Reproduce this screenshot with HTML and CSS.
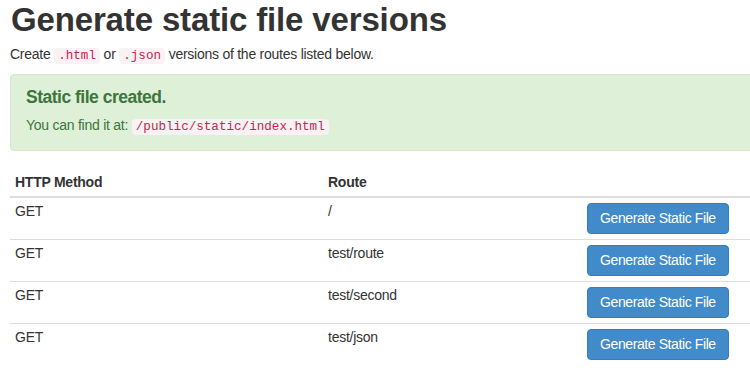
FILE: index.html
```html
<!DOCTYPE html>
<html lang="en">
<head>
  <meta charset="UTF-8">
  <title>Generate static file versions</title>
  <meta name="viewport" content="width=device-width, initial-scale=1.0">
  <link rel="stylesheet" href="styles.css">
</head>
<body>

  <div class="page">
    <h1>Generate static file versions</h1>
    <p class="lead-text">Create <code>.html</code> or <code>.json</code> versions of the routes listed below.</p>

    <!-- success message -->
    <div class="alert">
      <h4>Static file created.</h4>
      <p>You can find it at: <code>/public/static/index.html</code></p>
    </div>

    <!-- routes -->
    <table class="routes">
      <colgroup>
        <col class="col-method">
        <col class="col-route">
        <col>
      </colgroup>
      <thead>
        <tr>
          <th>HTTP Method</th>
          <th>Route</th>
          <th></th>
        </tr>
      </thead>
      <tbody>
        <tr>
          <td>GET</td>
          <td>/</td>
          <td><button class="btn">Generate Static File</button></td>
        </tr>
        <tr>
          <td>GET</td>
          <td>test/route</td>
          <td><button class="btn">Generate Static File</button></td>
        </tr>
        <tr>
          <td>GET</td>
          <td>test/second</td>
          <td><button class="btn">Generate Static File</button></td>
        </tr>
        <tr>
          <td>GET</td>
          <td>test/json</td>
          <td><button class="btn">Generate Static File</button></td>
        </tr>
      </tbody>
    </table>
  </div>

</body>
</html>
```

FILE: styles.css
```css
/* base */
html, body {
  overflow: hidden;
}

body {
  margin: 0;
  font-family: "Liberation Sans", Arial, sans-serif;
  font-size: 14px;
  line-height: 20px;
  letter-spacing: -0.25px;
  color: #333;
  background: #fff;
}

.page {
  width: 760px;
  padding-left: 10px;
}

h1 {
  margin: 2px 0 6px 1px;
  font-size: 33px;
  line-height: 36px;
  font-weight: bold;
  letter-spacing: -0.15px;
  color: #333;
}

.lead-text {
  margin: 0 0 8px;
}

code {
  padding: 1px 4px;
  font-family: "Liberation Mono", "DejaVu Sans Mono", monospace;
  font-size: 12.6px;
  letter-spacing: 0;
  color: #c7254e;
  background-color: #f9f2f4;
  border-radius: 4px;
}

/* alert box */
.alert {
  margin-bottom: 18px;
  padding: 12px 15px 13px;
  color: #3c763d;
  background-color: #dff0d8;
  border: 1px solid #d6e9c6;
  border-radius: 4px;
}

.alert h4 {
  margin: 0 0 8px;
  font-size: 17.5px;
  line-height: 20px;
  font-weight: bold;
  letter-spacing: -0.5px;
}

.alert p {
  margin: 0;
}

/* routes table */
.routes {
  width: 100%;
  border-collapse: collapse;
  border-spacing: 0;
  table-layout: fixed;
}

.col-method {
  width: 313px;
}

.col-route {
  width: 259px;
}

.routes th,
.routes td {
  padding: 5px;
  line-height: 17px;
  text-align: left;
  vertical-align: top;
}

.routes th {
  font-weight: bold;
  border-bottom: 2px solid #ddd;
}

.routes tbody tr + tr td {
  border-top: 1px solid #ddd;
}

.btn {
  display: inline-block;
  padding: 6px 12px;
  font-family: "Liberation Sans", Arial, sans-serif;
  font-size: 14px;
  line-height: 17px;
  letter-spacing: -0.4px;
  color: #fff;
  background-color: #428bca;
  border: 1px solid #357ebd;
  border-radius: 4px;
  cursor: pointer;
}

.btn:hover {
  background-color: #3276b1;
}
```
